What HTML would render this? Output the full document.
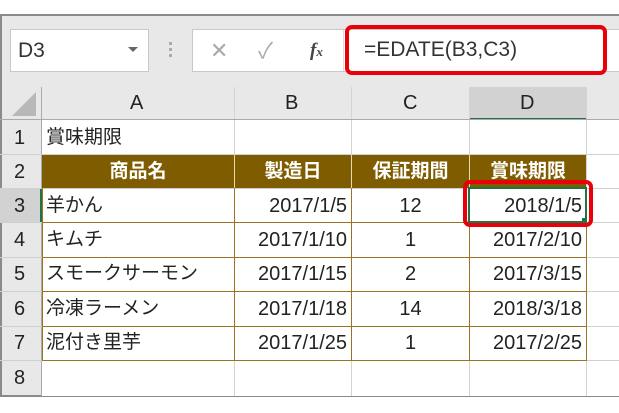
<!DOCTYPE html>
<html><head><meta charset="utf-8"><style>
*{margin:0;padding:0;box-sizing:border-box}
body{width:619px;height:413px;background:#fff;position:relative;overflow:hidden;font-family:"Liberation Sans","Noto Sans CJK JP",sans-serif;color:#222}
.a{position:absolute}
.frame{left:0;top:14px;width:640px;height:383px;border:2px solid #8a8a8a;background:#e8e8e8}
.t{position:absolute;font-size:20px;line-height:34px;white-space:nowrap}
.hl{position:absolute;background:#d0d0d0}
.vl{position:absolute;background:#d4d4d4}
</style></head><body>
<div class="a frame"></div>
<div class="a" style="left:10px;top:29px;width:139px;height:43px;background:#fff;border:1px solid #c8c8c8"></div>
<div class="t" style="left:18px;top:34px;font-size:21px;color:#333">D3</div>
<div class="a" style="left:128px;top:47px;width:0;height:0;border-left:5px solid transparent;border-right:5px solid transparent;border-top:5px solid #666"></div>
<div class="a" style="left:169px;top:42px;width:3px;height:3px;background:#aaa;box-shadow:0 6px 0 #aaa,0 12px 0 #aaa"></div>
<div class="a" style="left:192px;top:29px;width:430px;height:43px;background:#fff;border:1px solid #c8c8c8"></div>
<div class="t" style="left:210px;top:34px;color:#aaa;font-size:22px">✕</div>
<div class="t" style="left:258px;top:34px;color:#aaa;font-size:22px">✓</div>
<div class="t" style="left:310px;top:34px;color:#444;font-style:italic;font-weight:bold;font-family:'Liberation Serif',serif;font-size:19px">f<span style="font-size:13px">x</span></div>
<div class="a" style="left:343px;top:30px;width:1px;height:41px;background:#ddd"></div>
<div class="a" style="left:345px;top:25px;width:262px;height:50px;border:4px solid #e8000b;border-radius:7px"></div>
<div class="t" style="left:364px;top:33px;font-size:21px;color:#333">=EDATE(B3,C3)</div>
<div class="a" style="left:41px;top:120px;width:600px;height:276px;background:#fff"></div>
<div class="a" style="left:469px;top:87px;width:117px;height:33px;background:#d2d2d2;border-bottom:2px solid #217346"></div>
<div class="vl" style="left:41px;top:87px;width:1px;height:309px;background:#aaa"></div>
<div class="vl" style="left:234px;top:87px;width:1px;height:309px"></div>
<div class="vl" style="left:351px;top:87px;width:1px;height:309px"></div>
<div class="vl" style="left:469px;top:87px;width:1px;height:309px"></div>
<div class="vl" style="left:586px;top:87px;width:1px;height:309px"></div>
<div class="hl" style="left:0;top:119px;width:619px;height:1px;background:#aaa"></div>
<div class="a" style="left:12px;top:92px;width:0;height:0;border-left:24px solid transparent;border-bottom:24px solid #b8b8b8"></div>
<div class="t" style="left:130px;top:86px">A</div>
<div class="t" style="left:285px;top:86px">B</div>
<div class="t" style="left:403px;top:86px">C</div>
<div class="t" style="left:520px;top:86px">D</div>
<div class="hl" style="left:0;top:154px;width:619px;height:1px"></div>
<div class="hl" style="left:0;top:188px;width:619px;height:1px"></div>
<div class="hl" style="left:0;top:222px;width:619px;height:1px"></div>
<div class="hl" style="left:0;top:257px;width:619px;height:1px"></div>
<div class="hl" style="left:0;top:291px;width:619px;height:1px"></div>
<div class="hl" style="left:0;top:326px;width:619px;height:1px"></div>
<div class="hl" style="left:0;top:360px;width:619px;height:1px"></div>
<div class="a" style="left:0;top:189px;width:41px;height:33px;background:#d2d2d2"></div>
<div class="a" style="left:40px;top:189px;width:2px;height:33px;background:#217346"></div>
<div class="t" style="left:14px;top:121px">1</div>
<div class="t" style="left:14px;top:155px">2</div>
<div class="t" style="left:14px;top:189px">3</div>
<div class="t" style="left:14px;top:223px">4</div>
<div class="t" style="left:14px;top:257px">5</div>
<div class="t" style="left:14px;top:292px">6</div>
<div class="t" style="left:14px;top:326px">7</div>
<div class="t" style="left:14px;top:361px">8</div>
<div class="a" style="left:42px;top:155px;width:544px;height:33px;background:#7f5c00"></div>
<div class="a" style="left:42px;top:188px;width:545px;height:173px;border:1px solid #9a7420;border-top:none"></div>
<div class="a" style="left:234px;top:155px;width:1px;height:205px;background:#9a7420"></div>
<div class="a" style="left:351px;top:155px;width:1px;height:205px;background:#9a7420"></div>
<div class="a" style="left:469px;top:155px;width:1px;height:205px;background:#9a7420"></div>
<div class="a" style="left:234px;top:155px;width:1px;height:33px;background:#e8d9b0"></div>
<div class="a" style="left:351px;top:155px;width:1px;height:33px;background:#e8d9b0"></div>
<div class="a" style="left:469px;top:155px;width:1px;height:33px;background:#e8d9b0"></div>
<div class="a" style="left:42px;top:222px;width:544px;height:1px;background:#9a7420"></div>
<div class="a" style="left:42px;top:257px;width:544px;height:1px;background:#9a7420"></div>
<div class="a" style="left:42px;top:291px;width:544px;height:1px;background:#9a7420"></div>
<div class="a" style="left:42px;top:326px;width:544px;height:1px;background:#9a7420"></div>
<div class="t" style="left:46px;top:121px;font-size:19px">賞味期限</div>
<div class="t" style="left:42px;width:192px;top:155px;text-align:center;color:#fff;font-weight:bold;font-size:19px">商品名</div>
<div class="t" style="left:235px;width:116px;top:155px;text-align:center;color:#fff;font-weight:bold;font-size:19px">製造日</div>
<div class="t" style="left:352px;width:117px;top:155px;text-align:center;color:#fff;font-weight:bold;font-size:19px">保証期間</div>
<div class="t" style="left:470px;width:116px;top:155px;text-align:center;color:#fff;font-weight:bold;font-size:19px">賞味期限</div>
<div class="t" style="left:46px;top:189px;font-size:19px">羊かん</div>
<div class="t" style="left:46px;top:223px;font-size:19px">キムチ</div>
<div class="t" style="left:46px;top:257px;font-size:19px">スモークサーモン</div>
<div class="t" style="left:46px;top:292px;font-size:19px">冷凍ラーメン</div>
<div class="t" style="left:46px;top:326px;font-size:19px">泥付き里芋</div>
<div class="t" style="left:235px;width:112px;top:189px;text-align:right">2017/1/5</div>
<div class="t" style="left:235px;width:112px;top:223px;text-align:right">2017/1/10</div>
<div class="t" style="left:235px;width:112px;top:257px;text-align:right">2017/1/15</div>
<div class="t" style="left:235px;width:112px;top:292px;text-align:right">2017/1/18</div>
<div class="t" style="left:235px;width:112px;top:326px;text-align:right">2017/1/25</div>
<div class="t" style="left:352px;width:117px;top:189px;text-align:center">12</div>
<div class="t" style="left:352px;width:117px;top:223px;text-align:center">1</div>
<div class="t" style="left:352px;width:117px;top:257px;text-align:center">2</div>
<div class="t" style="left:352px;width:117px;top:292px;text-align:center">14</div>
<div class="t" style="left:352px;width:117px;top:326px;text-align:center">1</div>
<div class="t" style="left:470px;width:112px;top:189px;text-align:right">2018/1/5</div>
<div class="t" style="left:470px;width:112px;top:223px;text-align:right">2017/2/10</div>
<div class="t" style="left:470px;width:112px;top:257px;text-align:right">2017/3/15</div>
<div class="t" style="left:470px;width:112px;top:292px;text-align:right">2018/3/18</div>
<div class="t" style="left:470px;width:112px;top:326px;text-align:right">2017/2/25</div>
<div class="a" style="left:468px;top:187px;width:119px;height:36px;border:2px solid #217346"></div>
<div class="a" style="left:582px;top:218px;width:5px;height:5px;background:#217346"></div>
<div class="a" style="left:463px;top:180px;width:130px;height:47px;border:4px solid #e8000b;border-radius:7px"></div>
</body></html>
